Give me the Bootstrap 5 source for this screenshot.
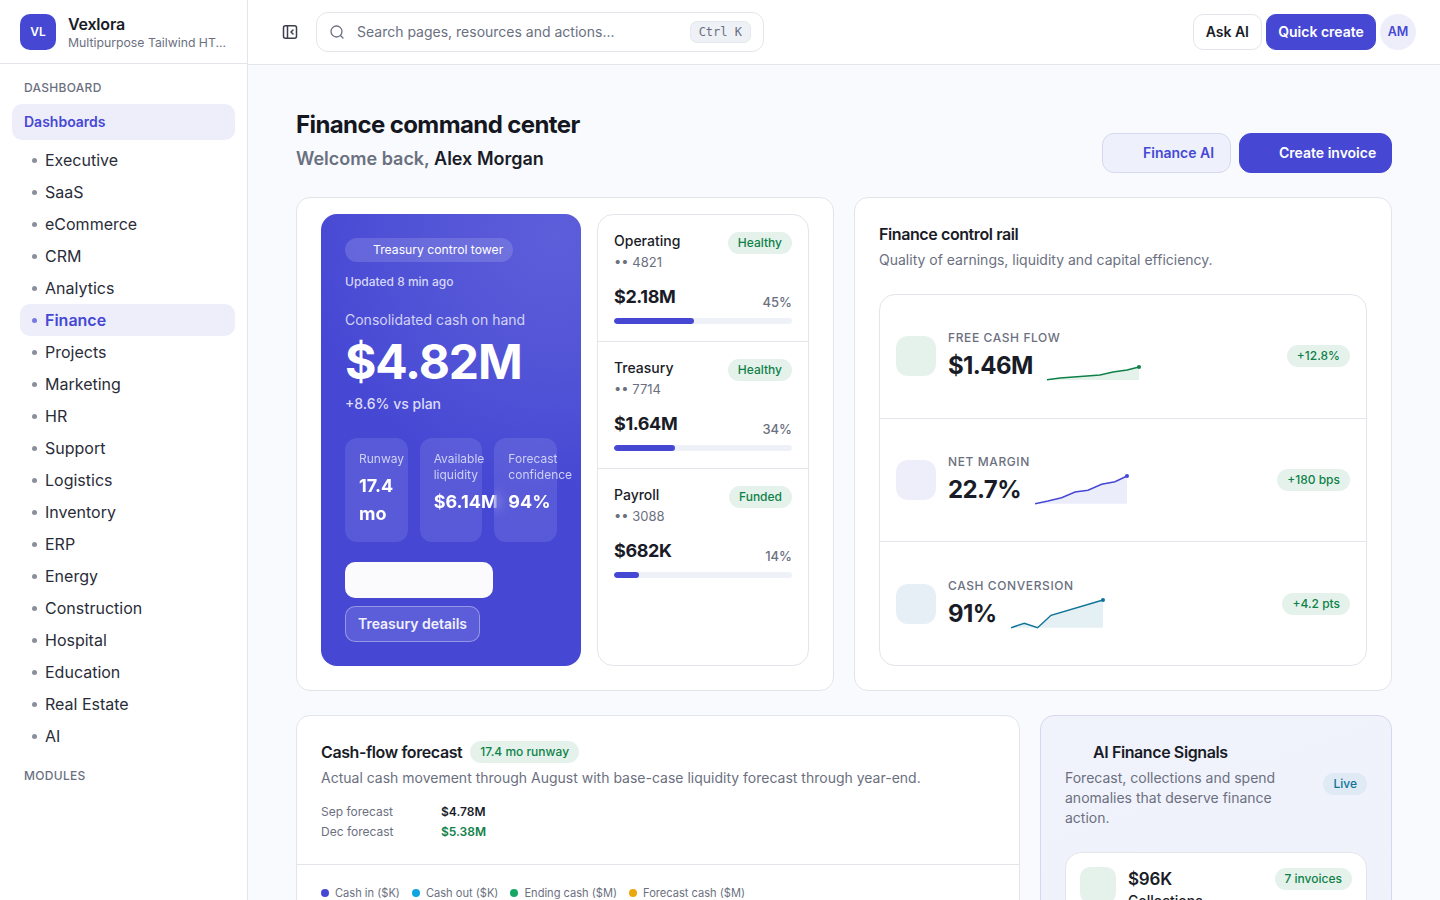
<!DOCTYPE html>
<html lang="en">
<head>
  <meta charset="UTF-8" />
  <title>Vexlora - Finance</title>
  <link href="https://cdn.jsdelivr.net/npm/bootstrap@5.3.3/dist/css/bootstrap.min.css" rel="stylesheet">
  <style>
    :root { --vx-primary: #4648d4; --vx-soft: #eeeefb; --vx-ink: #191c27; --vx-muted: #6b7080; --vx-line: #e3e5ea; --vx-green: #0f8148; --vx-green-soft: #e5f2ec; --vx-blue: #0f7398; --vx-blue-soft: #e5eff5; }
    body { font-family: Inter, "Liberation Sans", sans-serif; color: var(--vx-ink); background: #f8fafd; height: 900px; overflow: hidden; }
    .vx-shell { height: 900px; overflow: hidden; }
    .vx-side { width: 248px; flex: none; background: #fff; border-right: 1px solid var(--vx-line); }
    .vx-brand { height: 64px; padding: 0 20px; gap: 12px; border-bottom: 1px solid var(--vx-line); }
    .vx-logo { width: 36px; height: 36px; border-radius: 10px; background: var(--vx-primary); color: #fff; font-size: 12px; font-weight: 600; flex: none; }
    .vx-brand-text { margin-top: 3px; }
    .vx-brand-name { font-size: 16px; font-weight: 600; line-height: 20px; letter-spacing: -.2px; }
    .vx-brand-sub { font-size: 12.25px; line-height: 18px; color: var(--vx-muted); }
    .vx-menu-label { font-size: 12px; font-weight: 500; line-height: 16px; letter-spacing: .3px; color: var(--vx-muted); padding-left: 24px; }
    .vx-menu-group { margin: 0 12px; padding: 0 12px; height: 36px; border-radius: 10px; background: var(--vx-soft); color: var(--vx-primary); font-size: 14px; font-weight: 600; line-height: 36px; }
    .vx-sub { list-style: none; margin: 4px 12px 0 20px; padding: 0; }
    .vx-sub li { height: 32px; padding-left: 25px; border-radius: 10px; line-height: 32px; font-size: 16px; position: relative; color: #2a2d39; }
    .vx-sub li::before { content: ""; position: absolute; left: 12px; top: 14px; width: 5px; height: 5px; border-radius: 50%; background: #8b8f9c; }
    .vx-sub li.vx-on { background: var(--vx-soft); color: var(--vx-primary); font-weight: 600; }
    .vx-sub li.vx-on::before { background: var(--vx-primary); opacity: .7; }
    .vx-top { height: 65px; padding: 0 24px 0 34px; background: #fff; border-bottom: 1px solid var(--vx-line); }
    .vx-search { width: 448px; height: 40px; margin-left: 18px; padding: 0 12px; border: 1px solid var(--vx-line); border-radius: 12px; gap: 12px; color: var(--vx-muted); font-size: 14px; line-height: 20px; }
    .vx-kbd { font-family: "DejaVu Sans Mono", "Liberation Mono", monospace; font-size: 12px; line-height: 20px; padding: 0 8px; background: #eef1f6; color: var(--vx-muted); border: 1px solid #e5e8ee; border-radius: 7px; }
    .vx-btn { height: 36px; font-size: 14px; font-weight: 600; border-radius: 10px; padding: 0 12px; line-height: 34px; }
    .vx-btn-white { background: #fff; color: var(--vx-ink); border: 1px solid var(--vx-line); }
    .vx-btn-main { background: var(--vx-primary); color: #fff; border: 1px solid var(--vx-primary); }
    .vx-quick { width: 110px; padding: 0 11px; text-align: center; }
    .vx-avatar { width: 36px; height: 36px; background: var(--vx-soft); color: var(--vx-primary); font-size: 12.5px; font-weight: 600; }
    .vx-main { padding: 44px 48px 0; }
    .vx-title { font-size: 24px; font-weight: 700; letter-spacing: -.6px; line-height: 32px; margin: 0 0 3px; color: #14171f; }
    .vx-welcome { font-size: 18px; font-weight: 600; line-height: 29px; color: var(--vx-muted); }
    .vx-welcome b { color: var(--vx-ink); font-weight: 600; }
    .vx-tall { height: 40px; border-radius: 12px; line-height: 38px; }
    .vx-ai-btn { background: #eef1fb; color: var(--vx-primary); border: 1px solid #d5d9ee; width: 129px; padding: 0 16px 0 40px; }
    .vx-inv-btn { width: 153px; padding: 0 15px 0 39px; }
    .vx-panel { background: #fff; border: 1px solid var(--vx-line); border-radius: 14px; }
    .vx-row-a { display: grid; grid-template-columns: 538px 538px; gap: 20px; height: 494px; margin-top: 24px; }
    .vx-row-b { display: grid; grid-template-columns: 724px 352px; gap: 20px; margin-top: 24px; }
    .vx-hero-wrap { padding: 16px 24px 24px; }
    .vx-hero { width: 260px; flex: none; padding: 24px; border-radius: 16px; color: #fff; background: radial-gradient(circle at 90% 5%, #5c5eda 0, #5355d7 25%, #4648d4 52%); }
    .vx-pill { width: 168px; height: 24px; padding-left: 28px; border-radius: 12px; background: rgba(255,255,255,.14); font-size: 12.2px; line-height: 24px; }
    .vx-updated { font-size: 12px; font-weight: 500; line-height: 16px; margin-top: 12px; color: #d6d7f7; }
    .vx-hero-label { font-size: 14px; line-height: 20px; margin-top: 20px; color: #d2d3f6; }
    .vx-hero-num { font-size: 48px; font-weight: 700; line-height: 58px; letter-spacing: -1.1px; margin-top: 3px; }
    .vx-hero-note { font-size: 14px; font-weight: 500; line-height: 20px; margin-top: 3px; color: #dcdcf8; }
    .vx-tiles { display: grid; grid-template-columns: repeat(3, minmax(0, 1fr)); gap: 12px; height: 104px; margin-top: 24px; }
    .vx-tile { padding: 13px 14px; border-radius: 12px; background: rgba(255,255,255,.1); backdrop-filter: blur(6px); font-size: 12px; line-height: 16px; color: #ced0f5; }
    .vx-tile b { display: block; color: #fff; font-size: 18px; font-weight: 700; line-height: 28px; margin-top: 5px; white-space: normal; }
    .vx-tile span { white-space: nowrap; display: block; }
    .vx-tile b.vx-one { white-space: nowrap; }
    .vx-blank { width: 148px; height: 36px; margin-top: 20px; border-radius: 10px; background: #fbfbfd; }
    .vx-detail { width: 135px; height: 36px; margin-top: 8px; border-radius: 10px; background: rgba(255,255,255,.12); border: 1px solid rgba(255,255,255,.35); font-size: 14px; font-weight: 600; line-height: 34px; text-align: center; color: #f0f0fd; }
    .vx-accts { border: 1px solid var(--vx-line); border-radius: 16px; overflow: hidden; }
    .vx-acct { height: 127px; padding: 16px; border-bottom: 1px solid var(--vx-line); }
    .vx-acct-name { font-size: 14px; font-weight: 500; line-height: 20px; }
    .vx-acct-num { font-size: 13px; line-height: 18px; margin-top: 2px; color: var(--vx-muted); }
    .vx-acct-amt { font-size: 18px; font-weight: 700; line-height: 24px; letter-spacing: -.4px; }
    .vx-amt-row { margin-top: 14px; }
    .vx-pct { font-size: 13px; font-weight: 500; color: var(--vx-muted); line-height: 18px; margin-bottom: -2px; }
    .vx-bar { height: 6px; margin-top: 9px; background: #eef2f8; border-radius: 3px; }
    .vx-bar .progress-bar { background: var(--vx-primary); border-radius: 3px; }
    .vx-tag { font-size: 12px; font-weight: 500; line-height: 22px; padding: 0 10px; border-radius: 11px; white-space: nowrap; }
    .vx-tag-g { background: var(--vx-green-soft); color: var(--vx-green); }
    .vx-tag-b { background: #dfeaf4; color: var(--vx-blue); }
    .vx-tag-top { margin-top: 1px; }
    .vx-h { font-size: 16px; font-weight: 600; letter-spacing: -.4px; line-height: 24px; margin: 0; }
    .vx-lead { font-size: 14px; line-height: 20px; color: var(--vx-muted); }
    .vx-rail { height: 372px; margin-top: 24px; border: 1px solid var(--vx-line); border-radius: 16px; }
    .vx-rail-row { height: 123.5px; padding: 0 16px; border-bottom: 1px solid var(--vx-line); }
    .vx-rail-row:last-child { border-bottom: 0; }
    .vx-ico { width: 40px; height: 40px; border-radius: 12px; flex: none; margin-right: 12px; }
    .vx-ico-g { background: var(--vx-green-soft); }
    .vx-ico-p { background: var(--vx-soft); }
    .vx-ico-b { background: var(--vx-blue-soft); }
    .vx-kpi { font-size: 12px; font-weight: 500; letter-spacing: .6px; line-height: 16px; color: var(--vx-muted); text-transform: uppercase; }
    .vx-kpi-line { margin-top: 4px; }
    .vx-kpi-num { font-size: 24px; font-weight: 700; line-height: 32px; letter-spacing: -.6px; margin-right: 14px; }
    .vx-spark { display: block; width: 94px; height: 32px; flex: none; }
    .vx-fore { padding: 24px 24px 0; height: 148px; }
    .vx-fore-table { display: grid; grid-template-columns: 120px auto; justify-content: start; font-size: 12px; line-height: 20px; margin-top: 14px; color: var(--vx-muted); }
    .vx-fore-table b { font-weight: 600; color: var(--vx-ink); }
    .vx-fore-table b.vx-up { color: var(--vx-green); }
    .vx-legend { padding: 20px 24px; border-top: 1px solid var(--vx-line); gap: 12px; font-size: 11.1px; line-height: 16px; color: var(--vx-muted); }
    .vx-dot { width: 8px; height: 8px; border-radius: 50%; margin-right: 6px; display: inline-block; }
    .vx-signal { padding: 24px; background: linear-gradient(160deg, #f1f3fc, #eff1fb); border: 1px solid #d5d8ee; border-radius: 14px; height: 300px; }
    .vx-signal-h { padding-left: 28px; }
    .vx-sig-copy { width: 230px; }
    .vx-sig-card { margin-top: 24px; padding: 14px; background: #fff; border: 1px solid var(--vx-line); border-radius: 16px; height: 140px; }
    .vx-sig-ico { width: 36px; height: 36px; border-radius: 10px; background: var(--vx-green-soft); flex: none; margin-right: 12px; }
    .vx-sig-num { font-size: 17px; font-weight: 600; line-height: 24px; letter-spacing: -.2px; }
    .vx-sig-name { font-size: 14px; font-weight: 500; line-height: 20px; }
  </style>
</head>
<body>
  <div class="vx-shell d-flex">
    <aside class="vx-side">
      <div class="vx-brand d-flex align-items-center">
        <div class="vx-logo d-flex align-items-center justify-content-center">VL</div>
        <div class="vx-brand-text text-nowrap">
          <div class="vx-brand-name">Vexlora</div>
          <div class="vx-brand-sub">Multipurpose Tailwind HT...</div>
        </div>
      </div>
      <div class="vx-menu-label mt-3 mb-2">DASHBOARD</div>
      <div class="vx-menu-group">Dashboards</div>
      <ul class="vx-sub">
        <li>Executive</li><li>SaaS</li><li>eCommerce</li><li>CRM</li><li>Analytics</li>
        <li class="vx-on">Finance</li><li>Projects</li><li>Marketing</li><li>HR</li><li>Support</li>
        <li>Logistics</li><li>Inventory</li><li>ERP</li><li>Energy</li><li>Construction</li>
        <li>Hospital</li><li>Education</li><li>Real Estate</li><li>AI</li>
      </ul>
      <div class="vx-menu-label mt-3">MODULES</div>
    </aside>

    <div class="flex-grow-1 overflow-hidden">
      <header class="vx-top d-flex align-items-center">
        <svg width="16" height="16" viewBox="0 0 16 16" fill="none" stroke="#3c3f4b" stroke-width="1.5" stroke-linejoin="round" stroke-linecap="round"><rect x="1.5" y="1.75" width="13" height="12.5" rx="2"/><path d="M5.5 2v12M11 6 9 8l2 2"/></svg>
        <div class="vx-search d-flex align-items-center">
          <svg width="16" height="16" viewBox="0 0 16 16" fill="none" stroke="#6b7080" stroke-width="1.3" stroke-linecap="round"><circle cx="7.5" cy="7.5" r="5.5"/><path d="m11.7 11.7 2.3 2.3"/></svg>
          <span class="flex-grow-1">Search pages, resources and actions...</span>
          <span class="vx-kbd">Ctrl K</span>
        </div>
        <div class="ms-auto d-flex align-items-center gap-1">
          <div class="vx-btn vx-btn-white">Ask AI</div>
          <div class="vx-btn vx-btn-main vx-quick">Quick create</div>
          <div class="vx-avatar rounded-circle d-flex align-items-center justify-content-center">AM</div>
        </div>
      </header>

      <main class="vx-main">
        <div class="d-flex justify-content-between align-items-end">
          <div>
            <h1 class="vx-title">Finance command center</h1>
            <div class="vx-welcome">Welcome back, <b>Alex Morgan</b></div>
          </div>
          <div class="d-flex gap-2">
            <div class="vx-btn vx-tall vx-ai-btn text-nowrap">Finance AI</div>
            <div class="vx-btn vx-tall vx-btn-main vx-inv-btn text-nowrap">Create invoice</div>
          </div>
        </div>

        <div class="vx-row-a">
          <section class="vx-panel vx-hero-wrap d-flex gap-3">
            <div class="vx-hero">
              <div class="vx-pill text-nowrap">Treasury control tower</div>
              <div class="vx-updated">Updated 8 min ago</div>
              <div class="vx-hero-label">Consolidated cash on hand</div>
              <div class="vx-hero-num">$4.82M</div>
              <div class="vx-hero-note">+8.6% vs plan</div>
              <div class="vx-tiles">
                <div class="vx-tile"><span>Runway</span><b>17.4 mo</b></div>
                <div class="vx-tile"><span>Available<br>liquidity</span><b class="vx-one">$6.14M</b></div>
                <div class="vx-tile"><span>Forecast<br>confidence</span><b class="vx-one">94%</b></div>
              </div>
              <div class="vx-blank"></div>
              <div class="vx-detail text-nowrap">Treasury details</div>
            </div>
            <div class="vx-accts flex-grow-1">
              <div class="vx-acct">
                <div class="d-flex justify-content-between">
                  <div><div class="vx-acct-name">Operating</div><div class="vx-acct-num">•• 4821</div></div>
                  <span class="vx-tag vx-tag-g vx-tag-top align-self-start">Healthy</span>
                </div>
                <div class="vx-amt-row d-flex justify-content-between align-items-end"><span class="vx-acct-amt">$2.18M</span><span class="vx-pct">45%</span></div>
                <div class="progress vx-bar"><div class="progress-bar" style="width: 45%"></div></div>
              </div>
              <div class="vx-acct">
                <div class="d-flex justify-content-between">
                  <div><div class="vx-acct-name">Treasury</div><div class="vx-acct-num">•• 7714</div></div>
                  <span class="vx-tag vx-tag-g vx-tag-top align-self-start">Healthy</span>
                </div>
                <div class="vx-amt-row d-flex justify-content-between align-items-end"><span class="vx-acct-amt">$1.64M</span><span class="vx-pct">34%</span></div>
                <div class="progress vx-bar"><div class="progress-bar" style="width: 34%"></div></div>
              </div>
              <div class="vx-acct border-0">
                <div class="d-flex justify-content-between">
                  <div><div class="vx-acct-name">Payroll</div><div class="vx-acct-num">•• 3088</div></div>
                  <span class="vx-tag vx-tag-g vx-tag-top align-self-start">Funded</span>
                </div>
                <div class="vx-amt-row d-flex justify-content-between align-items-end"><span class="vx-acct-amt">$682K</span><span class="vx-pct">14%</span></div>
                <div class="progress vx-bar"><div class="progress-bar" style="width: 14%"></div></div>
              </div>
            </div>
          </section>

          <section class="vx-panel p-4">
            <h2 class="vx-h">Finance control rail</h2>
            <div class="vx-lead mt-1">Quality of earnings, liquidity and capital efficiency.</div>
            <div class="vx-rail">
              <div class="vx-rail-row d-flex align-items-center">
                <div class="vx-ico vx-ico-g"></div>
                <div>
                  <div class="vx-kpi">Free cash flow</div>
                  <div class="vx-kpi-line d-flex align-items-end"><div class="vx-kpi-num">$1.46M</div>
                    <svg class="vx-spark" viewBox="0 0 94 32" fill="none"><path d="M0 29.7 13 28l13.6-1L40 26l13-1 13-3 14-2 12-3v13H0z" fill="#e5f2ec"/><path d="M0 29.7 13 28l13.6-1L40 26l13-1 13-3 14-2 12-3" stroke="#0f8148" stroke-width="1.5"/><circle cx="92" cy="17" r="2" fill="#0f8148"/></svg>
                  </div>
                </div>
                <span class="vx-tag vx-tag-g ms-auto">+12.8%</span>
              </div>
              <div class="vx-rail-row d-flex align-items-center">
                <div class="vx-ico vx-ico-p"></div>
                <div>
                  <div class="vx-kpi">Net margin</div>
                  <div class="vx-kpi-line d-flex align-items-end"><div class="vx-kpi-num">22.7%</div>
                    <svg class="vx-spark" viewBox="0 0 94 32" fill="none"><path d="M0 29.7 13 27l13.6-3.300L40 18l13-1.700 13.600-6L80 7.700 92 2v27.700H0z" fill="#ecedfb"/><path d="M0 29.7 13 27l13.600-3.300L40 18l13-1.700 13.600-6L80 7.700 92 2" stroke="#4648d4" stroke-width="1.500"/><circle cx="92" cy="2" r="2" fill="#4648d4"/></svg>
                  </div>
                </div>
                <span class="vx-tag vx-tag-g ms-auto">+180 bps</span>
              </div>
              <div class="vx-rail-row d-flex align-items-center">
                <div class="vx-ico vx-ico-b"></div>
                <div>
                  <div class="vx-kpi">Cash conversion</div>
                  <div class="vx-kpi-line d-flex align-items-end"><div class="vx-kpi-num">91%</div>
                    <svg class="vx-spark" viewBox="0 0 94 32" fill="none"><path d="M0 29.700 13.300 25.300 26.600 29.700 40 17.300 92 2v27.700H0z" fill="#e5f0f5"/><path d="M0 29.700 13.300 25.300 26.600 29.700 40 17.300 92 2" stroke="#0f7398" stroke-width="1.500"/><circle cx="92" cy="2" r="2" fill="#0f7398"/></svg>
                  </div>
                </div>
                <span class="vx-tag vx-tag-g ms-auto">+4.2 pts</span>
              </div>
            </div>
          </section>
        </div>

        <div class="vx-row-b">
          <section class="vx-panel">
            <div class="vx-fore">
              <div class="d-flex align-items-center gap-2"><h2 class="vx-h">Cash-flow forecast</h2><span class="vx-tag vx-tag-g">17.4 mo runway</span></div>
              <div class="vx-lead mt-1">Actual cash movement through August with base-case liquidity forecast through year-end.</div>
              <div class="vx-fore-table">
                <span>Sep forecast</span><b>$4.78M</b>
                <span>Dec forecast</span><b class="vx-up">$5.38M</b>
              </div>
            </div>
            <div class="vx-legend d-flex">
              <span class="d-flex align-items-center"><i class="vx-dot" style="background:#4648d4"></i>Cash in ($K)</span>
              <span class="d-flex align-items-center"><i class="vx-dot" style="background:#0ea5e0"></i>Cash out ($K)</span>
              <span class="d-flex align-items-center"><i class="vx-dot" style="background:#16a765"></i>Ending cash ($M)</span>
              <span class="d-flex align-items-center"><i class="vx-dot" style="background:#eaa70f"></i>Forecast cash ($M)</span>
            </div>
          </section>

          <section class="vx-signal">
            <div class="d-flex justify-content-between align-items-center">
              <div>
                <h2 class="vx-h vx-signal-h">AI Finance Signals</h2>
                <div class="vx-lead vx-sig-copy mt-1">Forecast, collections and spend anomalies that deserve finance action.</div>
              </div>
              <span class="vx-tag vx-tag-b">Live</span>
            </div>
            <div class="vx-sig-card d-flex">
              <div class="vx-sig-ico"></div>
              <div class="flex-grow-1"><div class="vx-sig-num">$96K</div><div class="vx-sig-name">Collections</div></div>
              <span class="vx-tag vx-tag-g vx-tag-top align-self-start">7 invoices</span>
            </div>
          </section>
        </div>
      </main>
    </div>
  </div>
  <script src="https://cdn.jsdelivr.net/npm/bootstrap@5.3.3/dist/js/bootstrap.bundle.min.js"></script>
</body>
</html>
